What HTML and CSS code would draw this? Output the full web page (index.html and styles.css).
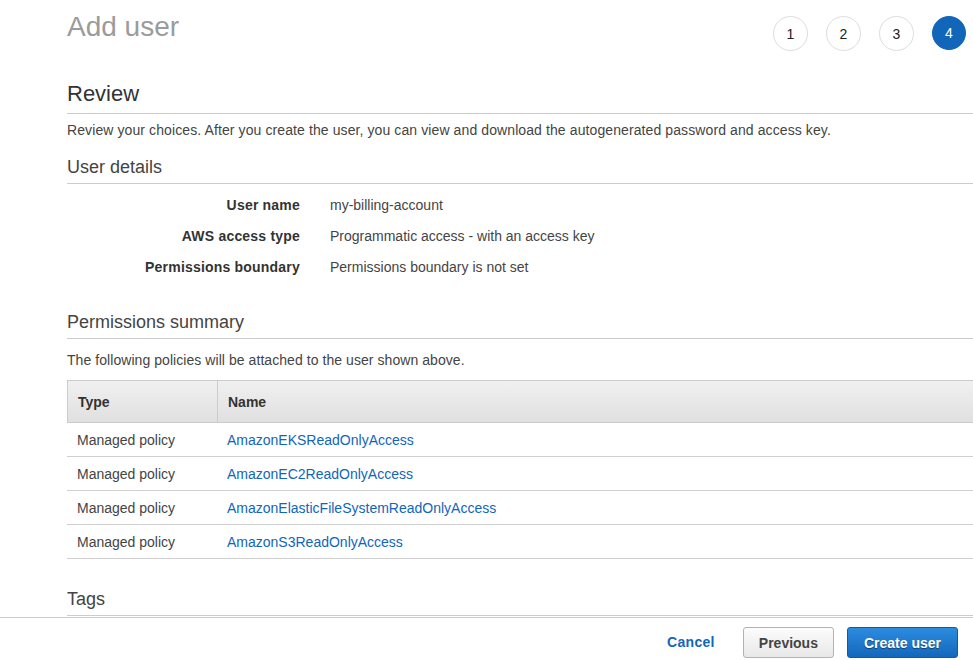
FILE: index.html
```html
<!DOCTYPE html>
<html lang="en">
<head>
<meta charset="utf-8">
<title>Add user</title>
<link rel="stylesheet" href="styles.css">
</head>
<body>
<div class="page">
  <main class="main">
    <header class="header">
      <h1 class="title">Add user</h1>
      <ol class="steps">
        <li class="step">1</li>
        <li class="step">2</li>
        <li class="step">3</li>
        <li class="step step-active">4</li>
      </ol>
    </header>

    <h2 class="h-review">Review</h2>
    <p class="intro">Review your choices. After you create the user, you can view and download the autogenerated password and access key.</p>

    <h3 class="h-section h-details">User details</h3>
    <dl class="details">
      <div class="drow"><dt>User name</dt><dd>my-billing-account</dd></div>
      <div class="drow"><dt>AWS access type</dt><dd>Programmatic access - with an access key</dd></div>
      <div class="drow"><dt>Permissions boundary</dt><dd>Permissions boundary is not set</dd></div>
    </dl>

    <h3 class="h-section h-perms">Permissions summary</h3>
    <p class="perm-note">The following policies will be attached to the user shown above.</p>

    <div class="table">
      <div class="trow thead">
        <div class="th">Type</div>
        <div class="th th-name">Name</div>
      </div>
      <div class="trow">
        <div class="td">Managed policy</div>
        <div class="td"><a class="link" href="#">AmazonEKSReadOnlyAccess</a></div>
      </div>
      <div class="trow">
        <div class="td">Managed policy</div>
        <div class="td"><a class="link" href="#">AmazonEC2ReadOnlyAccess</a></div>
      </div>
      <div class="trow">
        <div class="td">Managed policy</div>
        <div class="td"><a class="link" href="#">AmazonElasticFileSystemReadOnlyAccess</a></div>
      </div>
      <div class="trow">
        <div class="td">Managed policy</div>
        <div class="td"><a class="link" href="#">AmazonS3ReadOnlyAccess</a></div>
      </div>
    </div>

    <h3 class="h-section h-tags">Tags</h3>
  </main>
  <footer class="footer">
    <a class="cancel" href="#">Cancel</a>
    <button class="btn btn-prev" type="button">Previous</button>
    <button class="btn btn-primary" type="button">Create user</button>
  </footer>
</div>
</body>
</html>
```

FILE: styles.css
```css
* { box-sizing: border-box; }

html, body {
  margin: 0;
  padding: 0;
  background: #fff;
}

body {
  font-family: "Liberation Sans", Arial, sans-serif;
  font-size: 14px;
  color: #444;
}

.page {
  display: flex;
  flex-direction: column;
  height: 660px;
  overflow: hidden;
}

.main {
  height: 617px;
  flex: none;
  overflow: hidden;
  padding-left: 67px;
}

.header {
  display: flex;
  justify-content: space-between;
  align-items: flex-start;
  padding-top: 11px;
  padding-right: 7px;
}

.title {
  margin: 0;
  font-size: 28px;
  line-height: 32px;
  font-weight: normal;
  color: #9b9b9b;
}

.steps {
  list-style: none;
  margin: 5px 0 0;
  padding: 0;
  display: flex;
  gap: 18px;
}

.step {
  width: 35px;
  height: 35px;
  border: 1px solid #ddd;
  border-radius: 50%;
  display: flex;
  align-items: center;
  justify-content: center;
  font-size: 14px;
  color: #222;
  background: #fff;
}

.step-active {
  width: 34px;
  height: 34px;
  background: #1266ba;
  border-color: #1266ba;
  color: #fff;
}

.h-review {
  margin: 30px 0 0;
  font-size: 22px;
  line-height: 26px;
  font-weight: normal;
  color: #333;
  padding-bottom: 6px;
  border-bottom: 1px solid #ccc;
}

.intro {
  margin: 6px 0 0;
  line-height: 20px;
  color: #444;
  letter-spacing: 0.1px;
}

.h-section {
  margin: 0;
  font-size: 18px;
  line-height: 22px;
  font-weight: normal;
  color: #444;
  padding-bottom: 5px;
  border-bottom: 1px solid #ccc;
}

.h-details { margin-top: 16px; }
.h-perms { margin-top: 28px; }
.h-tags { margin-top: 29px; }

.details {
  margin: 6px 0 0;
}

.drow {
  display: grid;
  grid-template-columns: 233px 1fr;
  column-gap: 30px;
  padding: 5px 0 6px;
  line-height: 20px;
}

.drow dt {
  text-align: right;
  font-weight: bold;
  color: #333;
  letter-spacing: 0.2px;
}

.drow dd {
  margin: 0;
  color: #444;
}

.perm-note {
  margin: 11px 0 0;
  line-height: 20px;
  letter-spacing: 0.06px;
}

.table {
  margin-top: 10px;
}

.trow {
  display: grid;
  grid-template-columns: 150px 1fr;
  border-bottom: 1px solid #d0d0d0;
}

.thead {
  grid-template-columns: 149px 1fr;
  border-top: 1px solid #ccc;
  border-bottom: 1px solid #ccc;
  border-left: 1px solid #ccc;
  background: linear-gradient(#f0f0f0, #e0e0e0);
}

.th {
  padding: 11px 10px 10px;
  line-height: 20px;
  font-weight: bold;
  color: #333;
}

.th-name {
  border-left: 1px solid #ccc;
}

.td {
  padding: 7px 10px 6px;
  line-height: 20px;
  color: #444;
  white-space: nowrap;
}

.link {
  color: #1166bb;
  text-decoration: none;
}

.footer {
  flex: none;
  height: 43px;
  border-top: 1px solid #ccc;
  display: flex;
  justify-content: flex-end;
  align-items: flex-start;
  padding: 9px 15px 0 0;
}

.cancel {
  font-weight: bold;
  color: #1166bb;
  text-decoration: none;
  line-height: 31px;
  margin-right: 28px;
  letter-spacing: 0.3px;
}

.btn {
  height: 31px;
  font-family: "Liberation Sans", Arial, sans-serif;
  font-size: 14px;
  font-weight: bold;
  border-radius: 3px;
  cursor: pointer;
}

.btn-prev {
  padding: 0 15px;
  color: #444;
  background: linear-gradient(#fcfcfc, #e8e8e8);
  border: 1px solid #b3b3b3;
  margin-right: 13px;
}

.btn-primary {
  padding: 0 16px;
  color: #fff;
  background: linear-gradient(#2c8ce0, #1467bb);
  border: 1px solid #15589d;
  text-shadow: 0 1px 1px rgba(0, 0, 0, 0.45);
}
```
